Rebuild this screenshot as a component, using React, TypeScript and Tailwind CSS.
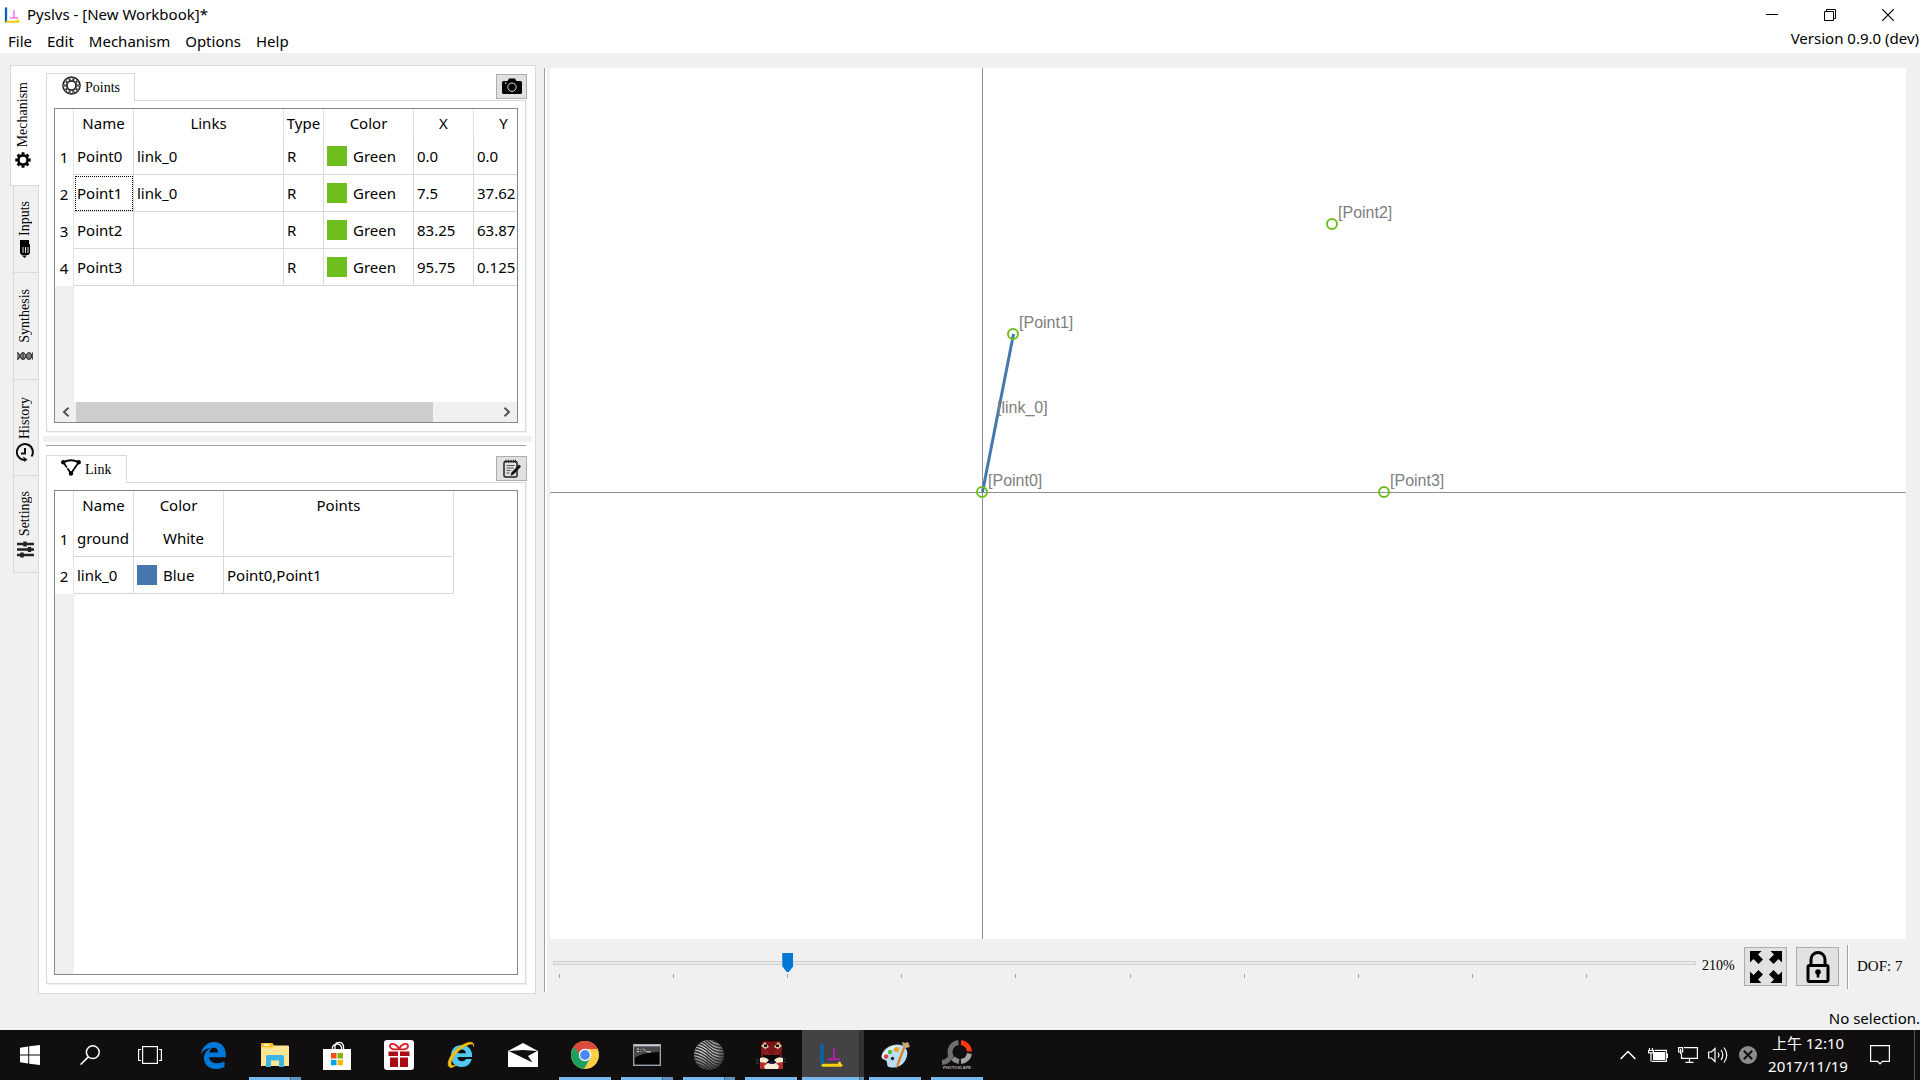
import React from "react";

const UI = "font-['Noto_Sans','Noto_Sans_CJK_TC',sans-serif]";
const SERIF = "font-['Liberation_Serif',serif]";

/* ---------- small icons ---------- */

function AppIcon({ size, accent, blue }: { size: number; accent: string; blue: string }) {
  return (
    <svg width={size} height={size} viewBox="0 0 24 24" fill="none" aria-hidden="true">
      <path d="M3 2v20" stroke={blue} strokeWidth="3.4" strokeLinecap="round" />
      <path d="M4 22.2h18" stroke="#f5cf13" strokeWidth="3" strokeLinecap="round" />
      <path d="M20.5 20v2" stroke="#f5cf13" strokeWidth="3" strokeLinecap="round" />
      <path d="M15 5v11M9 16.2h12" stroke={accent} strokeWidth="1.9" />
    </svg>
  );
}

function GearIcon() {
  return (
    <svg width="16" height="16" viewBox="0 0 16 16" fill="none" stroke="#000" aria-hidden="true">
      <circle cx="8" cy="8" r="4.6" strokeWidth="2.6" />
      <path d="M8 .3v2.4M8 13.3v2.4M.3 8h2.4M13.3 8h2.4M2.6 2.6l1.7 1.7M11.7 11.7l1.7 1.7M2.6 13.4l1.7-1.7M11.7 4.3l1.7-1.7" strokeWidth="3" />
    </svg>
  );
}

function InputsIcon() {
  return (
    <svg width="12" height="18" viewBox="0 0 12 18" aria-hidden="true">
      <path d="M1 0h9v4H1z" fill="#000" />
      <path d="M1 4h10v9l-1.500 2h-7L1 13z" fill="#000" />
      <path d="M4 7v6M6.500 7v6M9 7v6" stroke="#fff" strokeWidth=".9" />
      <path d="M3 15.500h5l-2.500 2.500z" fill="#000" />
    </svg>
  );
}

function DnaIcon() {
  return (
    <svg width="16" height="10" viewBox="0 0 16 10" fill="none" stroke="#333" strokeWidth="1.200" aria-hidden="true">
      <path d="M0 1.500C3 1.500 3 8.500 6 8.500S9 1.500 12 1.500s3 7 4 7" />
      <path d="M0 8.500C3 8.500 3 1.500 6 1.500s3 7 6 7 3-7 4-7" />
      <path d="M1 2v6M5.200 2v6M6.800 2v6M11 2v6M13 2v6M15 3v4" />
    </svg>
  );
}

function HistoryIcon() {
  return (
    <svg width="18" height="19" viewBox="0 0 18 19" fill="none" stroke="#111" aria-hidden="true">
      <path d="M8 17A8 8 0 1 1 15.500 13.500" strokeWidth="2" />
      <path d="M9 5v5.500H5" strokeWidth="2" />
      <path d="M7 13.500l4.500 3L8.500 19z" fill="#111" stroke="none" />
    </svg>
  );
}

function SlidersIcon() {
  return (
    <svg width="17" height="17" viewBox="0 0 17 17" stroke="#222" aria-hidden="true">
      <path d="M0 3h17M0 8.500h17M0 14h17" strokeWidth="2.400" />
      <path d="M8 .5v5M12.500 6v5M5 11.500v5" strokeWidth="3.400" />
    </svg>
  );
}

function BearingIcon() {
  return (
    <svg width="19" height="19" viewBox="0 0 19 19" fill="none" stroke="#222" aria-hidden="true">
      <circle cx="9.500" cy="9.500" r="8.700" strokeWidth="1.300" />
      <circle cx="9.500" cy="9.500" r="4.300" strokeWidth="1.200" />
      {[0, 36, 72, 108, 144, 180, 216, 252, 288, 324].map((a) => (
        <circle key={a} cx="9.500" cy="3" r="1.700" strokeWidth="1" transform={`rotate(${a} 9.500 9.500)`} />
      ))}
    </svg>
  );
}

function LinkIcon() {
  return (
    <svg width="20" height="17" viewBox="0 0 20 17" fill="none" stroke="#000" aria-hidden="true">
      <path d="M2.500 3Q10-.5 17.500 3" strokeWidth="1.900" />
      <path d="M2.500 3.500L10 14.500" strokeWidth="1.700" strokeDasharray="6 1" />
      <path d="M17.500 3.500L10 14.500" strokeWidth="1.700" />
      <g fill="#000" stroke="none">
        <circle cx="2.300" cy="3.300" r="2.200" />
        <circle cx="17.700" cy="3.300" r="2.200" />
        <circle cx="10" cy="14.500" r="2.200" />
      </g>
    </svg>
  );
}

function CameraIcon() {
  return (
    <svg width="20" height="17" viewBox="0 0 20 17" aria-hidden="true">
      <path d="M1.500 3h4L7 .5h6L14.500 3h4Q20 3 20 4.500v10q0 1.500-1.500 1.500h-17Q0 16 0 14.500v-10Q0 3 1.500 3z" fill="#000" />
      <circle cx="10" cy="9.200" r="4.200" fill="none" stroke="#ddd" strokeWidth="1" />
      <circle cx="3.800" cy="5" r=".8" fill="#fff" />
    </svg>
  );
}

function NoteIcon() {
  return (
    <svg width="18" height="19" viewBox="0 0 18 19" fill="none" aria-hidden="true">
      <rect x="1" y="2.500" width="13" height="15.500" rx="1.500" stroke="#222" strokeWidth="1.500" />
      <path d="M3 .8v3M5.500 .8v3M8 .8v3M10.500 .8v3M12.500 .8v3" stroke="#222" strokeWidth="1.100" />
      <path d="M3.500 6.500h8M3.500 9h7M3.500 11.500h4M3.500 14h3" stroke="#555" strokeWidth="1.100" />
      <path d="M16 5.500l2 2-7.500 8-3 1.200 1-3.200z" fill="#111" />
    </svg>
  );
}

function ExpandIcon() {
  return (
    <svg width="32" height="32" viewBox="0 0 32 32" aria-hidden="true">
      {[0, 90, 180, 270].map((a) => (
        <path key={a} d="M0 0h11.500L8 3.500l5 5L8.500 13l-5-5L0 11.500z" transform={`rotate(${a} 16 16)`} />
      ))}
    </svg>
  );
}

function LockIcon() {
  return (
    <svg width="24" height="32" viewBox="0 0 24 32" fill="none" stroke="#000" aria-hidden="true">
      <rect x="2" y="14.500" width="20" height="16" rx="1.500" strokeWidth="3" />
      <path d="M5 14V8.500a7 7 0 0 1 14 0V14" strokeWidth="3" />
      <circle cx="12" cy="21" r="2.800" fill="#000" stroke="none" />
      <path d="M12 21v5.500" strokeWidth="2.600" />
    </svg>
  );
}

/* ---------- left side tabs ---------- */

const sideTabs = [
  { label: "Mechanism", icon: <GearIcon />, cls: "h-[121px] w-[29px] border-r-0 bg-white pb-4 pr-1 z-10" },
  { label: "Inputs", icon: <InputsIcon />, cls: "h-[87px] w-[26px] border-t-0 bg-[#f0f0f0] pb-3.5 pr-0.5" },
  { label: "Synthesis", icon: <DnaIcon />, cls: "h-[107px] w-[26px] border-t-0 bg-[#f0f0f0] pb-3.5 pr-0.5" },
  { label: "History", icon: <HistoryIcon />, cls: "h-[96px] w-[26px] border-t-0 bg-[#f0f0f0] pb-3.5 pr-0.5" },
  { label: "Settings", icon: <SlidersIcon />, cls: "h-[97px] w-[26px] border-t-0 bg-[#f0f0f0] pb-3.5 pr-0.5" },
];

function SideTabs() {
  return (
    <div role="tablist" aria-orientation="vertical" className="-mr-px flex w-7 flex-col items-end">
      {sideTabs.map((t, i) => (
        <button
          key={t.label}
          role="tab"
          aria-selected={i === 0}
          className={`relative flex flex-col items-center justify-end gap-1 border border-[#d9d9d9] ${t.cls}`}
        >
          <span className={`rotate-180 text-[14px] leading-5 [writing-mode:vertical-rl] ${SERIF}`}>{t.label}</span>
          <span className="flex h-[18px] items-center">{t.icon}</span>
        </button>
      ))}
    </div>
  );
}

/* ---------- tables ---------- */

const headRow = "h-[29px] text-center font-normal";
const th = "border-r border-[#e0e0e0] p-0 pb-px font-normal overflow-hidden whitespace-nowrap";
const td = "border-r border-b border-[#d8d8d8] p-0 pl-[3px] whitespace-nowrap overflow-hidden";
const rowTh = "border-r border-[#e6e6e6] p-0 text-center font-normal";

function Swatch({ color, name }: { color: string; name: string }) {
  return (
    <span className="flex items-center gap-1.5">
      <span className={`size-5 ${color}`} />
      {name}
    </span>
  );
}

const points = [
  ["Point0", "link_0", "0.0", "0.0"],
  ["Point1", "link_0", "7.5", "37.62"],
  ["Point2", "", "83.25", "63.87"],
  ["Point3", "", "95.75", "0.125"],
];

function PointsTable() {
  return (
    <table className={`w-[479px] table-fixed border-separate border-spacing-0 bg-white text-[15px] leading-5 ${UI}`}>
      <colgroup>
        <col className="w-[19px]" />
        <col className="w-[60px]" />
        <col className="w-[150px]" />
        <col className="w-[40px]" />
        <col className="w-[90px]" />
        <col className="w-[60px]" />
        <col className="w-[60px]" />
      </colgroup>
      <thead>
        <tr className={headRow}>
          <td className={th} />
          {["Name", "Links", "Type", "Color", "X", "Y"].map((h) => (
            <th key={h} scope="col" className={th}>{h}</th>
          ))}
        </tr>
      </thead>
      <tbody>
        {points.map(([name, links, x, y], i) => (
          <tr key={name} className="h-[37px]">
            <th scope="row" className={rowTh}>{i + 1}</th>
            <td className={`${td} ${i === 1 ? "outline-1 -outline-offset-2 outline-dotted outline-black" : ""}`}>{name}</td>
            <td className={td}>{links}</td>
            <td className={td}>R</td>
            <td className={td}><Swatch color="bg-[#6ebe1e]" name="Green" /></td>
            <td className={td}>{x}</td>
            <td className={td}>{y}</td>
          </tr>
        ))}
      </tbody>
    </table>
  );
}

function LinksTable() {
  return (
    <table className={`w-[399px] table-fixed border-separate border-spacing-0 bg-white text-[15px] leading-5 ${UI}`}>
      <colgroup>
        <col className="w-[19px]" />
        <col className="w-[60px]" />
        <col className="w-[90px]" />
        <col className="w-[230px]" />
      </colgroup>
      <thead>
        <tr className={headRow}>
          <td className={th} />
          {["Name", "Color", "Points"].map((h) => (
            <th key={h} scope="col" className={th}>{h}</th>
          ))}
        </tr>
      </thead>
      <tbody>
        <tr className="h-[37px]">
          <th scope="row" className={rowTh}>1</th>
          <td className={td}>ground</td>
          <td className={td}><Swatch color="bg-white" name="White" /></td>
          <td className={td} />
        </tr>
        <tr className="h-[37px]">
          <th scope="row" className={rowTh}>2</th>
          <td className={td}>link_0</td>
          <td className={td}><Swatch color="bg-[#4678af]" name="Blue" /></td>
          <td className={td}>Point0,Point1</td>
        </tr>
      </tbody>
    </table>
  );
}

function Pane({
  tab, tabWidth, icon, action, actionLabel, className, children,
}: {
  tab: string; tabWidth: string; icon: React.ReactNode; action: React.ReactNode;
  actionLabel: string; className: string; children: React.ReactNode;
}) {
  return (
    <section className={`flex flex-col ${className}`}>
      <div className="flex items-start justify-between">
        <button
          role="tab"
          aria-selected="true"
          className={`relative z-10 -mb-px flex h-7 items-center gap-1 border border-b-0 border-[#d9d9d9] bg-white pl-3.5 text-[14px] ${tabWidth} ${SERIF}`}
        >
          <span className="flex w-5 justify-center pb-1">{icon}</span>
          {tab}
        </button>
        <button
          aria-label={actionLabel}
          className="mt-px -mr-px flex h-[25px] w-[31px] items-center justify-center border border-[#adadad] bg-[#e1e1e1]"
        >
          {action}
        </button>
      </div>
      <div className="flex min-h-0 flex-1 flex-col border border-[#d9d9d9] p-[7px] pb-2 shadow-[1px_1px_0_#f0f0f0]">
        <div className="flex min-h-0 flex-1 flex-col overflow-hidden border border-[#828790] bg-[linear-gradient(to_right,#f0f0f0_19px,#fff_19px)]">
          {children}
        </div>
      </div>
    </section>
  );
}

function HScroll() {
  return (
    <div className="mt-auto flex h-5 shrink-0 items-stretch bg-[#f0f0f0]">
      <button aria-label="Scroll left" className="flex w-[21px] items-center justify-center">
        <svg width="8" height="10" viewBox="0 0 8 10" fill="none" stroke="#555" strokeWidth="2"><path d="M6.500 .8L2 5l4.500 4.200" /></svg>
      </button>
      <div className="flex-1"><div className="h-full w-[85%] bg-[#cdcdcd]" /></div>
      <button aria-label="Scroll right" className="flex w-[21px] items-center justify-center">
        <svg width="8" height="10" viewBox="0 0 8 10" fill="none" stroke="#555" strokeWidth="2"><path d="M1.500 .8L6 5 1.500 9.200" /></svg>
      </button>
    </div>
  );
}

/* ---------- drawing canvas ---------- */

const nodes = [
  { name: "Point0", x: 432, y: 424 },
  { name: "Point1", x: 463, y: 266 },
  { name: "Point2", x: 782, y: 156 },
  { name: "Point3", x: 834, y: 424 },
];

function Canvas() {
  return (
    <svg className="min-h-0 w-full flex-1 bg-white font-['Liberation_Sans',sans-serif] text-[16px]" role="img" aria-label="Mechanism canvas">
      <g stroke="#8f8f8f" shapeRendering="crispEdges">
        <line x1="432.500" y1="0" x2="432.500" y2="100%" />
        <line x1="0" y1="424.500" x2="100%" y2="424.500" />
      </g>
      <line x1="432.500" y1="424" x2="463.500" y2="266" stroke="#4678af" strokeWidth="3" />
      <text x="447" y="345" fill="#808080">[link_0]</text>
      {nodes.map((n) => (
        <g key={n.name}>
          <circle cx={n.x} cy={n.y} r="5" fill="none" stroke="#6ebe1e" strokeWidth="2" />
          <text x={n.x + 6} y={n.y - 6} fill="#808080">[{n.name}]</text>
        </g>
      ))}
    </svg>
  );
}

function ZoomBar() {
  return (
    <div className={`flex h-[52px] items-start pt-1.5 text-[15px] ${SERIF}`}>
      <div className="ml-[3px] flex min-w-0 flex-1 flex-col">
        <input
          type="range"
          aria-label="Zoom"
          min={10}
          max={1000}
          defaultValue={210}
          className="mt-2 h-5 w-full appearance-none bg-transparent [&::-webkit-slider-runnable-track]:h-1 [&::-webkit-slider-runnable-track]:border [&::-webkit-slider-runnable-track]:border-[#d0d2d2] [&::-webkit-slider-runnable-track]:bg-[#e7eaea] [&::-webkit-slider-thumb]:-mt-[9px] [&::-webkit-slider-thumb]:h-[19px] [&::-webkit-slider-thumb]:w-[11px] [&::-webkit-slider-thumb]:appearance-none [&::-webkit-slider-thumb]:bg-[#0078d7] [&::-webkit-slider-thumb]:[clip-path:polygon(0_0,100%_0,100%_70%,60%_100%,40%_100%,0_70%)]"
        />
        <div className="mr-[109px] ml-1.5 flex justify-between" aria-hidden="true">
          {Array.from({ length: 10 }, (_, i) => (
            <span key={i} className="mt-px h-1 w-px bg-[#a5a596]" />
          ))}
        </div>
      </div>
      <span className="ml-1.5 h-10 w-[42px] pt-px text-[14px] leading-10">210%</span>
      <button aria-label="Zoom to fit" className="mt-0.5 flex h-[39px] w-[43px] items-center justify-center border border-[#adadad] bg-[#e1e1e1]">
        <ExpandIcon />
      </button>
      <button aria-label="Lock" className="mt-0.5 ml-[9px] flex h-[39px] w-[43px] items-center justify-center border border-[#adadad] bg-[#e1e1e1]">
        <LockIcon />
      </button>
      <span className="ml-2 h-11 w-0.5 border-r border-l border-l-[#a0a0a0] border-r-white" />
      <span className="ml-2 h-10 w-[49px] pt-px leading-10 whitespace-nowrap">DOF: 7</span>
    </div>
  );
}

/* ---------- taskbar ---------- */

const StartIcon = () => (
  <svg width="20" height="20" viewBox="0 0 20 20" fill="#fff"><path d="M0 2.800L8.200 1.500v8H0zM9.200 1.300L20 0v9.500H9.200zM0 10.500h8.200v8L0 17.300zM9.200 10.500H20V20L9.200 18.700z" /></svg>
);
const SearchIcon = () => (
  <svg width="20" height="20" viewBox="0 0 20 20" fill="none" stroke="#fff" strokeWidth="1.500"><circle cx="12.800" cy="7.200" r="6.400" /><path d="M8.300 11.900L.6 19.600" /></svg>
);
const TaskViewIcon = () => (
  <svg width="24" height="18" viewBox="0 0 24 18" fill="none" stroke="#fff" strokeWidth="1.200"><rect x="4.600" y=".6" width="14.800" height="16.800" /><path d="M3 3.500H.6v11H3M21 3.500h2.400v11H21" /></svg>
);
const EdgeIcon = () => (
  <svg width="25" height="27" viewBox="0 0 25 27" fill="#0078d7"><path d="M0 12.500C1 5 6 0 13 0c7.500 0 11.800 5.500 11.800 12.500v2.800H8.200c.3 4.200 3.800 6 8 6 3 0 5.400-.8 7.300-2v5.700C21.200 26.300 18.500 27 15.300 27 8 27 3 22.800 3 16.200c0-4.800 2.600-8 6.400-10C5 6.200 2 8.500 0 12.500zM8.400 10.500H17c0-3-1.400-4.700-4.100-4.700-2.600 0-4.100 2-4.500 4.700z" /></svg>
);
const FolderIcon = () => (
  <svg width="28" height="24" viewBox="0 0 28 24"><path d="M0 1Q0 0 1 0h10l2 2.500h14q1 0 1 1V23H0z" fill="#ffe594" /><path d="M1 0h10l2.500 3L11 4.500H0V1z" fill="#f9c22b" /><path d="M3 1.300h5v1.500H3z" fill="#fff" /><path d="M5 24V13.500q0-1.500 1.500-1.500h15q1.500 0 1.500 1.500V24h-5v-6.500h-8V24z" fill="#3cb5e5" /></svg>
);
const StoreIcon = () => (
  <svg width="28" height="29" viewBox="0 0 28 29"><path d="M9.500 8V6a5 5 0 0 1 9 0v2M12 8V5a4 4 0 0 1 4-3.500A4 4 0 0 1 20.500 5.500V8" fill="none" stroke="#fff" strokeWidth="1.300" /><path d="M0 8h28v21H0z" fill="#fff" /><path d="M8 12h5.500v5.500H8z" fill="#f25022" /><path d="M14.500 12H20v5.500h-5.500z" fill="#7fba00" /><path d="M8 18.800h5.500v5.500H8z" fill="#00a4ef" /><path d="M14.500 18.800H20v5.500h-5.500z" fill="#ffb900" /></svg>
);
const GiftIcon = () => (
  <svg width="30" height="30" viewBox="0 0 30 30"><rect width="30" height="30" rx="3" fill="#fff" /><path d="M15 9C12 3 6 2.500 6 6s5 4 9 3c4 1 9 .5 9-3s-6-3-9 3z" fill="none" stroke="#d9232a" strokeWidth="1.800" /><path d="M4.500 11.500h9.500V16H4.500zM16 11.500h9.500V16H16zM6 17.500h8V27H6zM16 17.500h8V27h-8z" fill="#a90c12" /></svg>
);
const IeIcon = () => (
  <svg width="30" height="30" viewBox="0 0 30 30"><path d="M5 15.500C5 9 9.500 5 15.700 5 22 5 26.500 9.500 26.200 17H11.500c.2 3 2 4.300 4.500 4.300 2 0 3.200-.7 4-2.200h5.700C24.300 24.500 21 27 16 27 9 27 5 22.500 5 15.500zm6.600-2.200h8.300c-.2-2.500-1.700-3.800-4-3.800s-4 1.300-4.300 3.800z" fill="#52c8f4" /><path d="M3.500 27C-1 24 6 9 19.500 3.500 24.500 1.500 28.500 1.800 27.500 6.500 27.800 3.500 25 3.500 21 5.300 10 10 3 22.500 5.500 25c1 1 3 .7 5-.5-2.500 2.500-5.200 3.600-7 2.500z" fill="#f5c21a" stroke="#e6ac0c" strokeWidth=".8" /></svg>
);
const MailIcon = () => (
  <svg width="30" height="24" viewBox="0 0 30 24"><path d="M0 8L15 0l15 8v16H0z" fill="#fff" /><path d="M.8 8L15 7l14.200 1-9.200 5 4.500 6.500z" fill="#0f0d0d" /></svg>
);
const ChromeIcon = () => (
  <svg width="28" height="28" viewBox="0 0 28 28"><circle cx="14" cy="14" r="14" fill="#fdce46" /><path d="M14 14L1.900 7A14 14 0 0 1 26.500 8H14z" fill="#db4a3e" /><path d="M1.900 7A14 14 0 0 0 13 28l6-10.500L14 14 8 16z" fill="#1da05f" /><path d="M1.900 7L8.500 18l5.500-4V8z" fill="#1da05f" /><path d="M3 5.500A14 14 0 0 1 26.500 8H14a6 6 0 0 0-6 5z" fill="#db4a3e" /><circle cx="14" cy="14" r="6.200" fill="#fff" /><circle cx="14" cy="14" r="4.900" fill="#4a89f3" /></svg>
);
const CmdIcon = () => (
  <svg width="28" height="22" viewBox="0 0 28 22"><rect x=".7" y=".7" width="26.600" height="20.600" fill="#050505" stroke="#9aa3ad" strokeWidth="1.400" /><path d="M1.400 2h25.200v6Q10 8 1.400 14z" fill="#484848" /><path d="M1 1.500h26" stroke="#c5ced6" strokeWidth="1.600" /><path d="M4 5h2M4 7.500h2M8 5v.8M8 7v.8M10 4.500l3 3M13.500 7.800H18" stroke="#ddd" strokeWidth="1" /></svg>
);
const SphereIcon = () => (
  <svg width="30" height="30" viewBox="0 0 30 30">
    <defs>
      <radialGradient id="ball" cx=".4" cy=".35" r=".65"><stop offset="0" stopColor="#fff" /><stop offset=".55" stopColor="#a8a8a8" /><stop offset="1" stopColor="#444" /></radialGradient>
      <clipPath id="ballClip"><circle cx="15" cy="15" r="15" /></clipPath>
    </defs>
    <circle cx="15" cy="15" r="15" fill="url(#ball)" />
    <g clipPath="url(#ballClip)" fill="none" stroke="#2a2a2a" strokeWidth="1.400">
      {[-21, -18, -15, -12, -9, -6, -3, 0, 3, 6, 9, 12, 15, 18].map((o) => (
        <path key={o} d={`M-2 ${o + 5}Q8 ${o + 6} 15 ${o + 13}T34 ${o + 18}`} />
      ))}
    </g>
  </svg>
);
const CougarIcon = () => (
  <svg width="30" height="30" viewBox="0 0 30 30">
    <path d="M4 0h23v29H4z" fill="#7c1416" />
    <path d="M4 0h23v1.500H4z" fill="#1a0505" />
    <path d="M4 0h3L5 8v8l2 3-3 1zM27 0h-3l2 8v8l-2 3 3 1z" fill="#1a0505" />
    <path d="M4 22h23v7H4z" fill="#b52a2c" />
    <path d="M6 9l5 6M9 9l4 6M25 9l-5 6M22 9l-4 6" stroke="#b04a4a" strokeDasharray="1 1" />
    <path d="M5 6l4-4 4 5-4 2zM26 6l-4-4-4 5 4 2z" fill="#d8c9a2" />
    <path d="M8 4.500h3V7H8zM20 4.500h3V7h-3z" fill="#111" />
    <path d="M7 15h17l1 4-7 5h-5l-7-5z" fill="#080808" />
    <path d="M4 18q5-2 9 2l-3 3-6-1zM27 18q-5-2-9 2l3 3 6-1z" fill="#f3ead0" />
    <path d="M8 26l4-3 3 1h2l3-1 3 3-1 3H9z" fill="#f5edd8" />
    <path d="M14 22h3v1.500h-3z" fill="#1f2a9c" />
    <path d="M0 20h3M0 23h3M28 19h2M28 22h2" stroke="#444" />
  </svg>
);
const PaintIcon = () => (
  <svg width="30" height="29" viewBox="0 0 30 29"><path d="M2 13C5 6 14 2 21 4c6 2 8 8 5 14-3 7-11 10-17 8-3-1-1-5-3-6.500S0 19 2 13z" fill="#b9def2" /><path d="M2.500 14C6 7 14 3.500 20 5c-6 1-13 5-14 12-1 1-4 1-3.500-3z" fill="#e4f4fc" /><circle cx="6" cy="15.500" r="2.200" fill="#e2403b" /><circle cx="10" cy="11" r="2.200" fill="#53b848" /><circle cx="16.500" cy="8.500" r="2.600" fill="#f9a51b" /><circle cx="12.500" cy="17.500" r="1.700" fill="#222" /><path d="M26 5l-7 18-3 5 1-6 7-18z" fill="#e07b25" /><path d="M22 1l3 1 3-1 2 5-4 1-3-1z" fill="#c9a57a" /></svg>
);
const PhotoIcon = () => (
  <svg width="30" height="30" viewBox="0 0 30 30" fill="none" strokeWidth="5"><path d="M16.500 2.500A9.500 9.500 0 0 0 9 16Q6 22 0 22.500" stroke="#6f6f6f" /><path d="M19 2.500A9.500 9.500 0 0 1 27.500 11.500" stroke="#fb3a14" /><path d="M27.500 13.500A9.500 9.500 0 0 1 19 21.500" stroke="#a3a3a3" /><path d="M17 21.500A9.500 9.500 0 0 1 11 18" stroke="#8b8b8b" /><text x="15" y="29" fill="#b5b5b5" stroke="none" fontSize="4" fontWeight="bold" textAnchor="middle" fontFamily="Liberation Sans, sans-serif">PHOTOSCAPE</text></svg>
);

type Task = { name: string; icon: React.ReactNode; state: "idle" | "open" | "stack" | "active" };

const tasks: Task[] = [
  { name: "Edge", icon: <EdgeIcon />, state: "idle" },
  { name: "File Explorer", icon: <FolderIcon />, state: "stack" },
  { name: "Store", icon: <StoreIcon />, state: "idle" },
  { name: "Gifts", icon: <GiftIcon />, state: "idle" },
  { name: "Internet Explorer", icon: <IeIcon />, state: "idle" },
  { name: "Mail", icon: <MailIcon />, state: "idle" },
  { name: "Chrome", icon: <ChromeIcon />, state: "open" },
  { name: "Command Prompt", icon: <CmdIcon />, state: "stack" },
  { name: "Sphere", icon: <SphereIcon />, state: "stack" },
  { name: "Cougar", icon: <CougarIcon />, state: "open" },
  { name: "Pyslvs", icon: <AppIcon size={24} accent="#b01fb0" blue="#0a64ad" />, state: "active" },
  { name: "Paint", icon: <PaintIcon />, state: "open" },
  { name: "PhotoScape", icon: <PhotoIcon />, state: "open" },
];

function TaskButton({ task }: { task: Task }) {
  const active = task.state === "active";
  return (
    <button
      aria-label={task.name}
      className={`relative flex h-full w-[62px] items-center justify-center ${active ? "border-r-[5px] border-[#333131] bg-[#444242] bg-clip-padding" : ""}`}
    >
      <span>{task.icon}</span>
      {task.state !== "idle" && (
        <span className={`absolute bottom-0 flex h-[3px] ${active ? "-right-[5px] left-0" : "inset-x-[5px]"}`}>
          <span className="flex-1 bg-[#76b9ed]" />
          {(active || task.state === "stack") && (
            <span className={`border-l border-[#41698a] bg-[#5f92bd] ${active ? "w-[5px]" : "w-[11px]"}`} />
          )}
        </span>
      )}
    </button>
  );
}

function Taskbar() {
  return (
    <footer className={`flex h-[50px] shrink-0 items-stretch bg-[#100e0e] text-white ${UI}`}>
      <button aria-label="Start" className="flex w-[60px] items-center justify-center"><StartIcon /></button>
      <button aria-label="Search" className="flex w-[60px] items-center justify-center"><SearchIcon /></button>
      <button aria-label="Task view" className="flex w-[60px] items-center justify-center"><TaskViewIcon /></button>
      <div className="ml-0.5 flex">
        {tasks.map((t) => <TaskButton key={t.name} task={t} />)}
      </div>
      <div className="ml-auto flex items-center">
        <button aria-label="Show hidden icons" className="w-[30px]">
          <svg className="mx-auto" width="16" height="10" viewBox="0 0 16 10" fill="none" stroke="#fff" strokeWidth="1.500"><path d="M.6 9L8 1.500 15.400 9" /></svg>
        </button>
        <button aria-label="Battery" className="w-[30px]">
          <svg className="mx-auto" width="20" height="14" viewBox="0 0 20 14" fill="none" stroke="#fff" strokeWidth="1.200"><path d="M4 13.300h14.300V2.300H6.500M19.500 5.500v4.500" /><path d="M5 4h12v8H5z" fill="#fff" stroke="none" /><path d="M1.500 0v2.500M4.500 0v2.500M.6 2.500h4.800v2.300H.6zM3 5v8.500" /></svg>
        </button>
        <button aria-label="Network" className="w-[30px]">
          <svg className="mx-auto" width="20" height="16" viewBox="0 0 20 16" fill="none" stroke="#fff" strokeWidth="1.200"><path d="M6 .6h13.400v10.800H3.500V6.500M11.500 11.400V15M7.500 15.300h8" /><path d="M.6 .6h4V5h-4zM2.600 2v5" /></svg>
        </button>
        <button aria-label="Volume" className="w-[30px]">
          <svg className="mx-auto" width="20" height="18" viewBox="0 0 20 18" fill="none" stroke="#fff" strokeWidth="1.200"><path d="M.6 6h2.800L7 2.500v13L3.400 12H.6z" /><path d="M10 6.500q1.800 2.500 0 5M13 4q3.600 5 0 10M16 1.500q5.500 7.500 0 15" /></svg>
        </button>
        <button aria-label="Status" className="w-[30px]">
          <svg className="mx-auto" width="18" height="18" viewBox="0 0 18 18"><circle cx="9" cy="9" r="9" fill="#8c8c8c" /><path d="M4.800 4.800l8.400 8.400M13.200 4.800l-8.400 8.400" stroke="#111" strokeWidth="2" /></svg>
        </button>
        <div className="w-[90px] text-center text-[15px] leading-[23px]">
          <div>上午 12:10</div>
          <div>2017/11/19</div>
        </div>
        <button aria-label="Notifications" className="w-[61px]">
          <svg className="ml-[17px]" width="20" height="20" viewBox="0 0 20 20" fill="none" stroke="#fff" strokeWidth="1.200"><path d="M.6 .6h18.800v15.800H12.500L10 19l-2.500-2.600H.6z" /></svg>
        </button>
        <span className="h-full w-1.5 border-l border-[#5a5a5a]" />
      </div>
    </footer>
  );
}

/* ---------- window ---------- */

export default function App() {
  return (
    <div className={`flex h-screen flex-col overflow-hidden bg-[#f0f0f0] text-black ${UI}`}>
      <header className="h-[53px] shrink-0 bg-white text-[15px]">
        <div className="flex h-[29px] items-center">
          <span className="ml-1 w-[23px]"><AppIcon size={16} accent="#f060e8" blue="#0a64ad" /></span>
          <h1>Pyslvs - [New Workbook]*</h1>
          <div className="mr-[3px] ml-auto flex">
            <button aria-label="Minimize" className="flex h-[27px] w-[58px] items-center justify-center">
              <svg width="12" height="12" viewBox="0 0 12 12" stroke="#000"><path d="M0 5.500h12" /></svg>
            </button>
            <button aria-label="Restore" className="flex h-[27px] w-[58px] items-center justify-center">
              <svg width="12" height="12" viewBox="0 0 12 12" fill="none" stroke="#000"><path d="M.5 2.500h9v9h-9zM2.500 2.500v-2h9v9h-2" /></svg>
            </button>
            <button aria-label="Close" className="flex h-[27px] w-[58px] items-center justify-center">
              <svg width="12" height="12" viewBox="0 0 12 12" stroke="#000" strokeWidth="1.200"><path d="M.3 .3l11.400 11.400M11.700 .3L.3 11.700" /></svg>
            </button>
          </div>
        </div>
        <div className="flex items-start">
          <nav className="flex gap-[15px] pl-2 leading-6">
            {["File", "Edit", "Mechanism", "Options", "Help"].map((m) => (
              <button key={m}>{m}</button>
            ))}
          </nav>
          <span className="ml-auto pr-px leading-[18px]">Version 0.9.0 (dev)</span>
        </div>
      </header>

      <main className="flex min-h-0 flex-1">
        <div className="mt-3 mb-[13px] ml-[11px] flex w-[525px] shrink-0">
          <SideTabs />
          <div className="flex min-w-0 flex-1 flex-col border border-[#d9d9d9] bg-white px-[7px] pt-[7px] pb-[9px]">
            <Pane
              tab="Points"
              tabWidth="w-[89px]"
              icon={<BearingIcon />}
              action={<CameraIcon />}
              actionLabel="Capture"
              className="mr-0.5 h-[359px] shrink-0"
            >
              <PointsTable />
              <HScroll />
            </Pane>
            <div className="mt-1 -mr-1 -ml-[3px] h-1.5 shrink-0 bg-[#f0f0f0]" />
            <div className="mt-[3px] mr-0.5 h-px shrink-0 bg-[#a0a0a0]" />
            <Pane
              tab="Link"
              tabWidth="w-[81px]"
              icon={<LinkIcon />}
              action={<NoteIcon />}
              actionLabel="Edit link"
              className="mt-[9px] mr-0.5 min-h-0 flex-1"
            >
              <LinksTable />
            </Pane>
          </div>
        </div>

        <div className="mt-[15px] mb-[15px] ml-2 w-[3px] border-l border-[#a0a0a0] bg-white" />

        <div className="mt-[15px] mr-3.5 mb-4 ml-[3px] flex min-w-0 flex-1 flex-col">
          <Canvas />
          <ZoomBar />
        </div>
      </main>

      <div className="-mt-1 flex h-[27px] shrink-0 items-start justify-end text-[15px] leading-[31px]">No selection.</div>
      <Taskbar />
    </div>
  );
}
